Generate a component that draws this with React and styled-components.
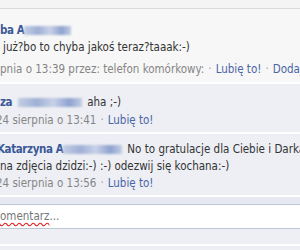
import styled, { createGlobalStyle } from "styled-components";

const GlobalStyle = createGlobalStyle`
    html, body {
        margin: 0;
        padding: 0;
        width: 300px;
        height: 250px;
        overflow: hidden;
        background: #edeff4;
    }
`;

const Thread = styled.div`
    width: 300px;
    height: 250px;
    overflow: hidden;
    font-family: "DejaVu Sans Condensed", "DejaVu Sans", sans-serif;
    font-size: 11.5px;
    color: #333333;
    background: #edeff4;
`;

const TopStrip = styled.div`
    height: 8px;
    background: #f4f4f4;
    border-bottom: 1px solid #dadada;
`;

const Comment = styled.div`
    background: ${({ $plain }) => ($plain ? "#f7f7f7" : "#edeff4")};
    padding: ${({ $top }) => $top}px 0 ${({ $bottom }) => $bottom}px 0;
    border-bottom: 2px solid #ffffff;
    white-space: nowrap;
`;

const Line = styled.div`
    line-height: 17px;
    height: 17px;
    margin-left: ${({ $indent = 0 }) => $indent}px;
    margin-top: ${({ $gap = 0 }) => $gap}px;
`;

const Name = styled.span`
    font-weight: bold;
    letter-spacing: -0.4px;
    color: #3b5998;
`;

const Blur = styled.span`
    display: inline-block;
    vertical-align: middle;
    width: ${({ $w }) => $w}px;
    height: 9px;
    margin: 0 ${({ $after = 4 }) => $after}px 0 ${({ $before = 0 }) => $before}px;
    background: linear-gradient(90deg, #c3cde4, #9fb0d6 30%, #c8d1e7 55%, #8fa2cf 80%, #c3cde4);
    filter: blur(1px);
`;

const Meta = styled(Line)`
    color: #858585;
`;

const Dot = styled.span`
    color: #a0a0a0;
    margin: 0 4px;
`;

const Link = styled.span`
    color: #4a64a6;
`;

const Band = styled.div`
    background: #e6e9f1;
    padding-top: 7px;
`;

const Input = styled.div`
    background: #ffffff;
    border-top: 1px solid #bdc7d8;
    border-bottom: 1px solid #bdc7d8;
    height: 23px;
    line-height: 23px;
    color: #777777;
    white-space: nowrap;
`;

const Squiggle = styled.span`
    text-decoration: underline wavy #e02020;
    text-decoration-skip-ink: none;
    text-underline-offset: 2px;
`;

const Footer = styled.div`
    height: 15px;
    background: #edeff4;
    border-bottom: 2px solid #ffffff;
`;

export default function App() {
    return (
        <>
            <GlobalStyle />
            <Thread>
                <TopStrip />
                <Comment $plain $top={13} $bottom={4}>
                    <Line>
                        <Name>ba A</Name>
                        <Blur $w={47} />
                    </Line>
                    <Line $indent={3}>już?bo to chyba jakoś teraz?taaak:-)</Line>
                    <Meta $gap={5}>
                        pnia o 13:39 przez: telefon komórkowy:<Dot>·</Dot>
                        <Link>Lubię to!</Link>
                        <Dot>·</Dot>
                        <Link>Dodaj komentarz</Link>
                    </Meta>
                </Comment>
                <Comment $top={10} $bottom={3}>
                    <Line>
                        <Name>za</Name>
                        <Blur $w={64} $before={6} $after={5} />
                        aha ;-)
                    </Line>
                    <Meta $gap={1} $indent={-4}>
                        24 sierpnia o 13:41<Dot>·</Dot>
                        <Link>Lubię to!</Link>
                    </Meta>
                </Comment>
                <Comment $top={7} $bottom={3}>
                    <Line $indent={-3}>
                        <Name>Katarzyna A</Name>
                        <Blur $w={59} $after={5} />
                        No to gratulacje dla Ciebie i Darka
                    </Line>
                    <Line>na zdjęcia dzidzi:-) :-) odezwij się kochana:-)</Line>
                    <Meta $indent={-4}>
                        24 sierpnia o 13:56<Dot>·</Dot>
                        <Link>Lubię to!</Link>
                    </Meta>
                </Comment>
                <Band>
                    <Input>
                        <Squiggle>omentarz</Squiggle>...
                    </Input>
                </Band>
                <Footer />
            </Thread>
        </>
    );
}
